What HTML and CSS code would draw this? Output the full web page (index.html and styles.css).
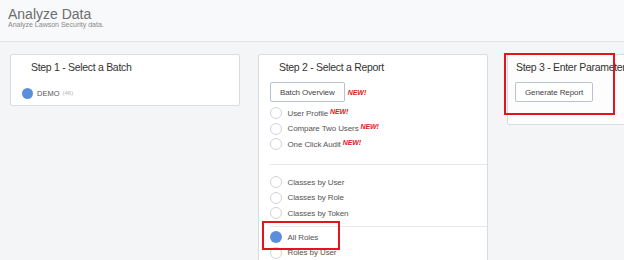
FILE: index.html
```html
<!DOCTYPE html>
<html lang="en">
<head>
    <meta charset="UTF-8">
    <meta name="viewport" content="width=device-width, initial-scale=1.0">
    <title>Analyze Data</title>
    <link rel="stylesheet" href="styles.css">
</head>
<body>
    <div class="page-header">
        <h1>Analyze Data</h1>
        <div class="subtitle">Analyze Lawson Security data.</div>
    </div>

    <div class="steps">
        <div class="card">
            <h2 class="card-title">Step 1 - Select a Batch</h2>
            <div class="batch-row">
                <span class="dot"></span>
                <span class="batch-name">DEMO</span>
                <span class="batch-count">(46)</span>
            </div>
        </div>

        <div class="card card-tall">
            <h2 class="card-title">Step 2 - Select a Report</h2>
            <div class="btn-row">
                <button class="btn">Batch Overview</button>
                <span class="new">NEW!</span>
            </div>
            <div class="group">
                <div class="option"><span class="radio"></span>User Profile <span class="new up">NEW!</span></div>
                <div class="option"><span class="radio"></span>Compare Two Users <span class="new up">NEW!</span></div>
                <div class="option"><span class="radio"></span>One Click Audit <span class="new up">NEW!</span></div>
            </div>
            <div class="group group-sep">
                <div class="option"><span class="radio"></span>Classes by User</div>
                <div class="option"><span class="radio"></span>Classes by Role</div>
                <div class="option"><span class="radio"></span>Classes by Token</div>
            </div>
            <div class="group group-sep group-tight">
                <div class="option"><span class="radio checked"></span>All Roles</div>
                <div class="option"><span class="radio"></span>Roles by User</div>
                <div class="option"><span class="radio"></span>Roles by Token</div>
            </div>
            <div class="highlight highlight-role"></div>
        </div>

        <div class="card card-params">
            <h2 class="card-title">Step 3 - Enter Parameters</h2>
            <div class="btn-row">
                <button class="btn">Generate Report</button>
            </div>
        </div>
    </div>

    <div class="highlight highlight-params"></div>
</body>
</html>
```

FILE: styles.css
```css
html, body {
    height: 260px;
}
body {
    margin: 0;
    font-family: "Liberation Sans", Arial, sans-serif;
    background-color: #f4f5f7;
    color: #555;
    overflow: hidden;
    position: relative;
}
.page-header {
    height: 34px;
    padding: 7px 8px 0;
    background-color: #f8f9fb;
    border-bottom: 1px solid #e2e5e9;
}
.page-header h1 {
    margin: 0;
    font-size: 14px;
    line-height: 14px;
    font-weight: normal;
    color: #6d6d6d;
}
.subtitle {
    font-size: 7px;
    line-height: 7px;
    color: #888;
}
.steps {
    display: flex;
    align-items: flex-start;
    gap: 18px;
    padding: 12px 0 0 10px;
}
.card {
    position: relative;
    flex: 0 0 230px;
    box-sizing: border-box;
    background: #fff;
    border: 1px solid #d9dde2;
    border-radius: 2px;
    padding: 6px 0 6px 11px;
}
.card-tall {
    padding-bottom: 30px;
}
.card-params {
    margin-left: 1px;
    padding: 6px 0 22px 7px;
    background: #fdfdfe;
}
.card-title {
    margin: 0 0 0 9px;
    font-size: 10.5px;
    line-height: 13px;
    letter-spacing: -0.3px;
    font-weight: normal;
    color: #333;
    white-space: nowrap;
}
.card-params .card-title {
    margin-left: 1px;
}
.batch-row {
    display: flex;
    align-items: center;
    height: 12px;
    margin-top: 13px;
    font-size: 7.5px;
}
.dot {
    width: 11px;
    height: 11px;
    border-radius: 50%;
    background-color: #5b8edb;
    margin-right: 4px;
}
.batch-name {
    color: #555;
}
.batch-count {
    margin-left: 3px;
    color: #b5b5b5;
    font-size: 6px;
}
.btn-row {
    display: flex;
    align-items: center;
    gap: 3px;
    margin-top: 8px;
}
.btn {
    height: 20px;
    padding: 0 9px;
    font-family: inherit;
    font-size: 8px;
    letter-spacing: -0.1px;
    color: #444;
    background: #fff;
    border: 1px solid #b8c3cf;
    border-radius: 2px;
}
.new {
    font-size: 7px;
    font-weight: bold;
    font-style: italic;
    color: #e0201c;
}
.new.up {
    position: relative;
    top: -2px;
    margin-left: 2px;
}
.group {
    margin-top: 3.5px;
    padding-bottom: 12px;
}
.group-sep {
    margin-top: 0;
    border-top: 1px solid #e6e8eb;
    padding-top: 9.25px;
    padding-bottom: 5.25px;
}
.group-tight {
    padding-top: 2.5px;
}
.option {
    display: flex;
    align-items: center;
    height: 15.5px;
    font-size: 8px;
    letter-spacing: -0.1px;
    color: #555;
    white-space: nowrap;
}
.radio {
    box-sizing: border-box;
    width: 12px;
    height: 12px;
    border: 1px solid #cfd3d8;
    border-radius: 50%;
    background: #fff;
    margin-right: 5.5px;
}
.radio.checked {
    border: none;
    background-color: #5b8edb;
}
.highlight {
    position: absolute;
    border: 2px solid #e3141c;
    box-sizing: border-box;
    pointer-events: none;
}
.highlight-role {
    left: 3px;
    top: 166px;
    width: 78px;
    height: 29px;
}
.highlight-params {
    left: 504px;
    top: 53px;
    width: 111px;
    height: 62px;
}
```
